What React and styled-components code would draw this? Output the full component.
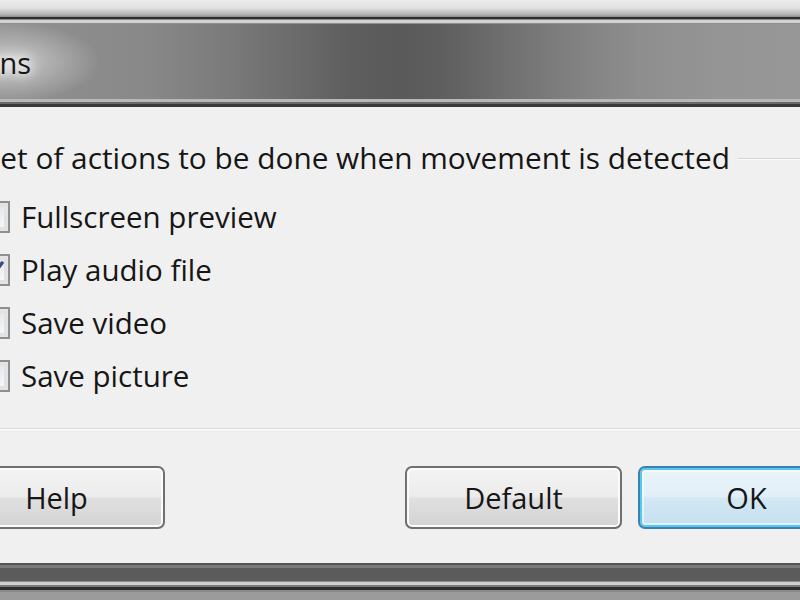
import React from 'react';
import styled, { createGlobalStyle } from 'styled-components';

const Global = createGlobalStyle`
  html, body { margin: 0; padding: 0; }
  body {
    width: 800px; height: 600px; overflow: hidden;
    background: #e8e8e8;
    font-family: "Open Sans", "Segoe UI", "Liberation Sans", sans-serif;
    color: #161616;
  }
`;

const Screen = styled.div`
  width: 800px;
  height: 600px;
  overflow: hidden;
  display: flex;
  flex-direction: column;
`;

const Backdrop = styled.div`
  flex: none;
  height: 17px;
  background: linear-gradient(#ececec 0%, #e2e2e2 45%, #b4b4b4 85%, #8c8c8c 100%);
`;

const Window = styled.div`
  flex: 1;
  width: 1000px;
  margin-left: -100px;
  display: flex;
  flex-direction: column;
  min-height: 0;
`;

const TitleBar = styled.div`
  flex: none;
  height: 90px;
  display: flex;
  align-items: center;
  padding-left: 24px;
  box-sizing: border-box;
  background:
    linear-gradient(to bottom,
      #2e2e2e 0 2px,
      #8a8a8a 2px 3px,
      #d2d2d2 3px 6px,
      #8e8e8e 6px 7px,
      transparent 7px calc(100% - 8px),
      #b8b8b8 calc(100% - 8px) calc(100% - 5px),
      #6a6a6a calc(100% - 5px) calc(100% - 3px),
      #3a3a3a calc(100% - 3px) 100%),
    radial-gradient(ellipse 90px 40px at 110px 50%, rgba(225,225,225,0.7), rgba(225,225,225,0) 100%),
    linear-gradient(to right,
      #9a9a9a 0px,
      #8e8e8e 150px,
      #888888 250px,
      #7a7a7a 330px,
      #6a6a6a 400px,
      #5e5e5e 450px,
      #5a5a5a 500px,
      #5f5f5f 545px,
      #6e6e6e 600px,
      #808080 670px,
      #8e8e8e 740px,
      #959595 820px,
      #999999 1000px);
`;

const TitleText = styled.span`
  font-size: 29px;
  color: #161616;
  text-shadow: 0 0 8px #fff, 0 0 14px #fff, 0 0 20px rgba(255,255,255,0.8);
`;

const Body = styled.div`
  flex: 1;
  background: #f0f0f0;
  display: flex;
  flex-direction: column;
  min-height: 0;
`;

const Group = styled.div`
  display: flex;
  flex-direction: column;
  margin-top: 30px;
  padding-left: 78px;
`;

const GroupHeader = styled.div`
  display: flex;
  align-items: center;
  height: 40px;
  padding-left: 6px;
`;

const GroupLabel = styled.span`
  font-size: 29.8px;
  white-space: nowrap;
`;

const GroupLine = styled.div`
  flex: 1;
  height: 1px;
  background: #d5d5d5;
  margin-left: 8px;
  margin-top: 2px;
  box-shadow: 0 1px 0 #fbfbfb;
`;

const Options = styled.div`
  display: flex;
  flex-direction: column;
  margin-top: 13px;
`;

const Row = styled.label`
  display: flex;
  align-items: center;
  height: 53px;
  gap: 11px;
`;

const Box = styled.span`
  flex: none;
  width: 32px;
  height: 32px;
  box-sizing: border-box;
  border: 2px solid #8e8f8f;
  background: #f4f4f4;
  box-shadow: inset 0 0 0 2px #e4e4e4, inset 0 0 0 4px #dfe2e6;
  background-image: linear-gradient(135deg, #cfd3d8 0%, #f6f6f6 80%);
  display: flex;
  align-items: center;
  justify-content: center;
`;

const RowText = styled.span`
  font-size: 29.5px;
  white-space: nowrap;
`;

const Separator = styled.div`
  margin-top: 26px;
  height: 1px;
  background: #dadada;
  box-shadow: 0 1px 0 #ffffff;
`;

const Buttons = styled.div`
  display: flex;
  align-items: center;
  margin-top: 37px;
  padding: 0 45px 0 48px;
  gap: 16px;
`;

const Spacer = styled.div`
  flex: 1;
`;

const Button = styled.button`
  width: 217px;
  height: 63px;
  box-sizing: border-box;
  border-radius: 7px;
  font-family: inherit;
  font-size: 29px;
  color: #161616;
  padding: 0;
  border: 2px solid ${p => (p.$primary ? '#3c7fb1' : '#707070')};
  background: ${p =>
    p.$primary
      ? 'linear-gradient(#eaf4fa 0%, #e1eff8 48%, #d2e7f3 52%, #c6e0ef 100%)'
      : 'linear-gradient(#f3f3f3 0%, #ececec 48%, #e0e0e0 52%, #d2d2d2 100%)'};
  box-shadow: ${p =>
    p.$primary
      ? 'inset 0 0 0 2px #54c8ee, inset 0 0 0 4px rgba(255,255,255,0.5)'
      : 'inset 0 0 0 2px #fbfbfb'};
`;

const BottomFrame = styled.div`
  flex: none;
  height: 38px;
  background: linear-gradient(to bottom,
    #f0f0f0 0 1px,
    #545454 1px 3px,
    #7a7a7a 3px 6px,
    #5b5b5b 6px 19px,
    #8a8a8a 19px 20px,
    #cfcfcf 20px 23px,
    #7a7a7a 23px 25px,
    #2f2f2f 25px 28px,
    #8a8a8a 28px 30px,
    #9b9b9b 30px 100%);
`;

const Check = () => (
  <svg width="22" height="22" viewBox="0 0 22 22">
    <path d="M3 11 L9 17 L19 4" fill="none" stroke="#3b4f7c" strokeWidth="3.5" strokeLinecap="round" strokeLinejoin="round" />
  </svg>
);

const items = [
  { label: 'Fullscreen preview', checked: false },
  { label: 'Play audio file', checked: true },
  { label: 'Save video', checked: false },
  { label: 'Save picture', checked: false },
];

export default function App() {
  return (
    <>
      <Global />
      <Screen>
        <Backdrop />
        <Window>
          <TitleBar>
            <TitleText>Options</TitleText>
          </TitleBar>
          <Body>
            <Group>
              <GroupHeader>
                <GroupLabel>Set of actions to be done when movement is detected</GroupLabel>
                <GroupLine />
              </GroupHeader>
              <Options>
                {items.map(it => (
                  <Row key={it.label}>
                    <Box>{it.checked && <Check />}</Box>
                    <RowText>{it.label}</RowText>
                  </Row>
                ))}
              </Options>
            </Group>
            <Separator />
            <Buttons>
              <Button>Help</Button>
              <Spacer />
              <Button>Default</Button>
              <Button $primary>OK</Button>
            </Buttons>
          </Body>
          <BottomFrame />
        </Window>
      </Screen>
    </>
  );
}
